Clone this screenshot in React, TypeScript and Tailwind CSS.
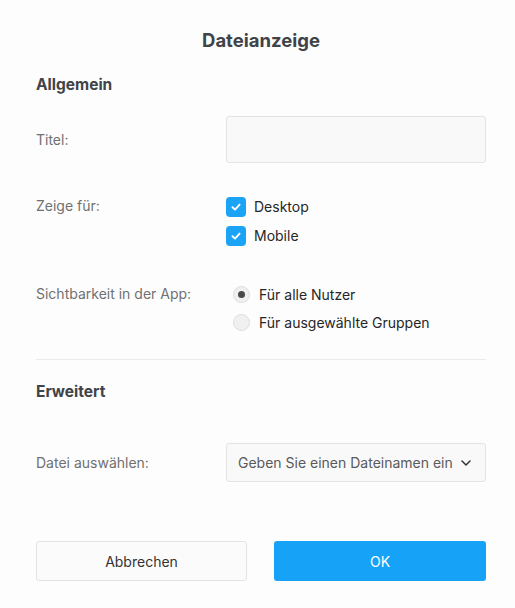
import React from "react";

function Check() {
  return (
    <span className="flex h-5 w-5 items-center justify-center rounded-[4px] bg-[#1ba3f5]">
      <svg width="12" height="12" viewBox="0 0 12 12" fill="none">
        <path d="M2.5 6.2 L5 8.6 L9.6 3.6" stroke="white" strokeWidth="1.9" strokeLinecap="round" strokeLinejoin="round" />
      </svg>
    </span>
  );
}

function Radio({ on }: { on?: boolean }) {
  return (
    <span className="flex h-[17px] w-[17px] items-center justify-center rounded-full border border-[#dedede] bg-[#f0f0f0]">
      {on && <span className="h-[7px] w-[7px] rounded-full bg-[#4a4a4a]" />}
    </span>
  );
}

export default function App() {
  return (
    <div className="min-h-[608px] w-[515px] bg-[#fdfdfd] pl-9 pr-[29px] text-[14px] font-['Inter',sans-serif]">
      <div className="pt-[27px] text-center text-[18.5px] font-bold leading-[26px] text-[#404348]">Dateianzeige</div>
      <div className="mt-[21px] text-[15.5px] font-bold leading-[22px] text-[#404348]">Allgemein</div>

      <div className="mt-[20px] grid grid-cols-[190px_1fr] items-center">
        <div className="text-[#707070]">Titel:</div>
        <div className="h-[47px] rounded-[3px] border border-[#e3e3e3] bg-[#f9f9f9]" />
      </div>

      <div className="mt-[33px] grid grid-cols-[190px_1fr]">
        <div className="leading-[20px] text-[#707070]">Zeige für:</div>
        <div className="flex flex-col gap-[8px]">
          <div className="flex items-center gap-[8px] text-[#262626]"><Check /><span>Desktop</span></div>
          <div className="flex items-center gap-[8px] text-[#262626]"><Check /><span>Mobile</span></div>
        </div>
      </div>

      <div className="mt-[38px] grid grid-cols-[190px_1fr]">
        <div className="leading-[20px] text-[#707070]">Sichtbarkeit in der App:</div>
        <div className="flex flex-col gap-[8px] pl-[7px]">
          <div className="flex h-5 items-center gap-[9px] text-[#262626]"><Radio on /><span>Für alle Nutzer</span></div>
          <div className="flex h-5 items-center gap-[9px] text-[#262626]"><Radio /><span>Für ausgewählte Gruppen</span></div>
        </div>
      </div>

      <div className="mt-[27px] h-px bg-[#ebebeb]" />

      <div className="mt-[21px] text-[15.5px] font-bold leading-[22px] text-[#404348]">Erweitert</div>

      <div className="mt-[40px] grid grid-cols-[190px_1fr] items-center">
        <div className="text-[#707070]">Datei auswählen:</div>
        <div className="flex h-[39px] items-center justify-between rounded-[3px] border border-[#e3e3e3] bg-[#f9f9f9] pl-[11px] pr-[14px] text-[#5a5a5a]">
          <span>Geben Sie einen Dateinamen ein</span>
          <svg width="10" height="6" viewBox="0 0 10 6" fill="none">
            <path d="M1 1 L5 5 L9 1" stroke="#333" strokeWidth="1.5" strokeLinecap="round" strokeLinejoin="round" />
          </svg>
        </div>
      </div>

      <div className="mt-[59px] grid grid-cols-[211px_212px] justify-between">
        <button className="h-[40px] rounded-[3px] border border-[#e3e3e3] bg-[#fbfbfb] text-[#333]">Abbrechen</button>
        <button className="h-[40px] rounded-[3px] bg-[#16a3f7] text-white">OK</button>
      </div>
    </div>
  );
}
